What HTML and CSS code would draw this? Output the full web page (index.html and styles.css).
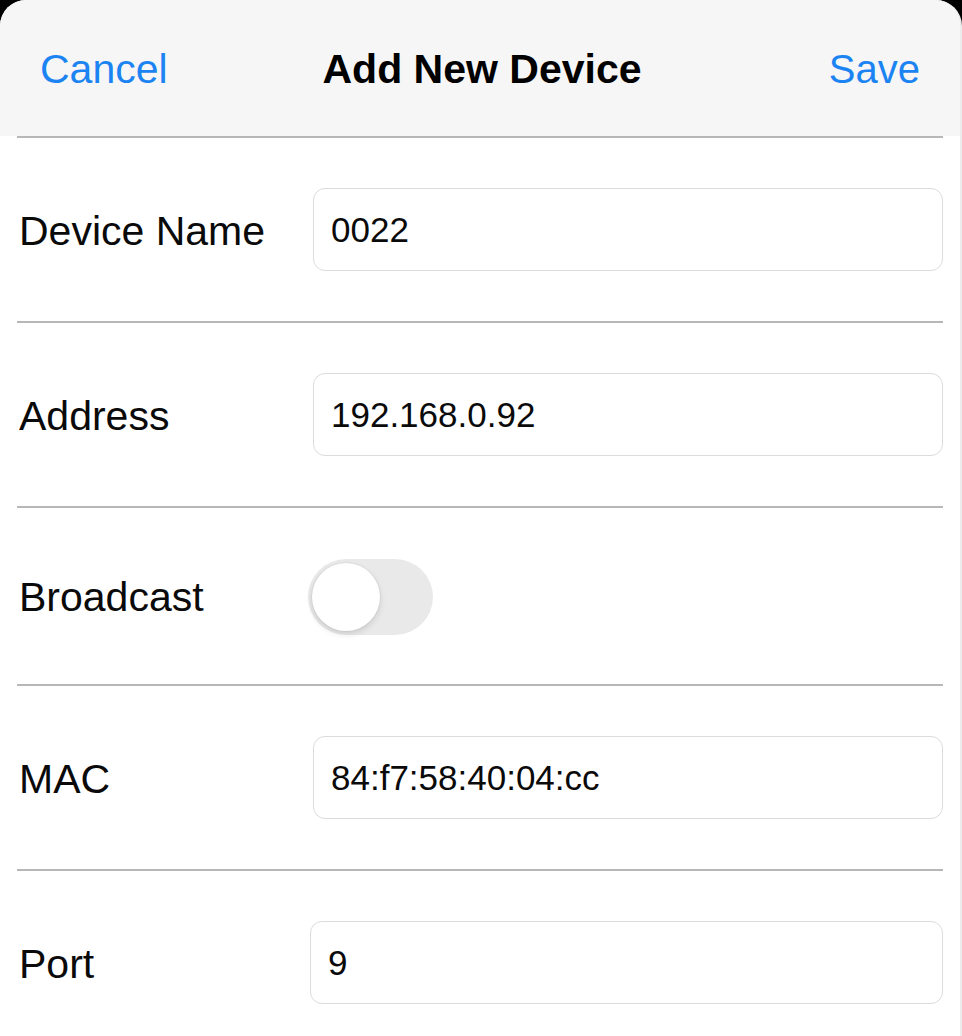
FILE: index.html
```html
<!DOCTYPE html>
<html lang="en">
<head>
  <meta charset="UTF-8" />
  <meta name="viewport" content="width=device-width, initial-scale=1" />
  <title>Add New Device</title>
  <link rel="stylesheet" href="styles.css">
</head>
<body>
  <div class="sheet">
    <div class="navbar">
      <a href="#" class="nav-btn">Cancel</a>
      <h1>Add New Device</h1>
      <a href="#" class="nav-btn">Save</a>
    </div>
    <form class="device-form">
      <div class="row">
        <label for="name">Device Name</label>
        <input type="text" id="name" value="0022" />
      </div>
      <div class="row">
        <label for="address">Address</label>
        <input type="text" id="address" value="192.168.0.92" />
      </div>
      <div class="row row-switch">
        <label for="broadcast">Broadcast</label>
        <span class="switch">
          <input type="checkbox" id="broadcast" />
          <span class="knob"></span>
        </span>
      </div>
      <div class="row">
        <label for="mac">MAC</label>
        <input type="text" id="mac" value="84:f7:58:40:04:cc" />
      </div>
      <div class="row row-port">
        <label for="port">Port</label>
        <input type="text" id="port" value="9" />
      </div>
    </form>
  </div>
</body>
</html>
```

FILE: styles.css
```css
html {
  background-color: #000;
}
body {
  margin: 0;
  font-family: 'Liberation Sans', Arial, sans-serif;
  color: #0a0a0a;
}
.sheet {
  width: 960px;
  height: 1036px;
  background-color: white;
  border-top-left-radius: 26px;
  border-top-right-radius: 26px;
  border-right: 2px solid #ececec;
  overflow: hidden;
}
.navbar {
  height: 136px;
  background-color: #f6f6f6;
  display: flex;
  align-items: center;
  justify-content: space-between;
  padding: 2px 40px 0 40px;
  box-sizing: border-box;
}
.navbar h1 {
  margin: 0 0 0 4px;
  font-size: 41px;
  font-weight: 700;
  color: #000;
}
.nav-btn {
  color: #1c84f2;
  text-decoration: none;
  font-size: 41px;
  width: 140px;
}
.nav-btn:last-child {
  text-align: right;
  font-size: 40px;
}
.device-form {
  margin: 0 17px 0 17px;
}
.row {
  display: flex;
  align-items: center;
  height: 183px;
  border-top: 2px solid #b7b7b7;
}
.row label {
  width: 294px;
  padding-left: 2px;
  padding-top: 3px;
  flex-shrink: 0;
  font-size: 41px;
}
.row input[type="text"] {
  flex-grow: 1;
  height: 83px;
  box-sizing: border-box;
  padding: 0 17px;
  border: 1.5px solid #dcdcdc;
  border-radius: 12px;
  font-family: 'Liberation Sans', Arial, sans-serif;
  font-size: 35px;
  color: #0a0a0a;
  background: white;
  outline: none;
}
.row-switch {
  height: 176px;
}
.row-port input[type="text"] {
  margin-left: -3px;
}
.switch {
  position: relative;
  width: 125px;
  height: 76px;
  margin-left: -5px;
  margin-top: 2px;
  border-radius: 38px;
  background-color: #e9e9ea;
}
.switch input {
  position: absolute;
  opacity: 0;
  margin: 0;
  width: 100%;
  height: 100%;
}
.switch .knob {
  position: absolute;
  left: 4px;
  top: 4px;
  width: 68px;
  height: 68px;
  border-radius: 50%;
  background-color: white;
  box-shadow: 0 3px 6px rgb(0 0 0 / 0.12), 0 0 0 1px rgb(0 0 0 / 0.04);
}
```
